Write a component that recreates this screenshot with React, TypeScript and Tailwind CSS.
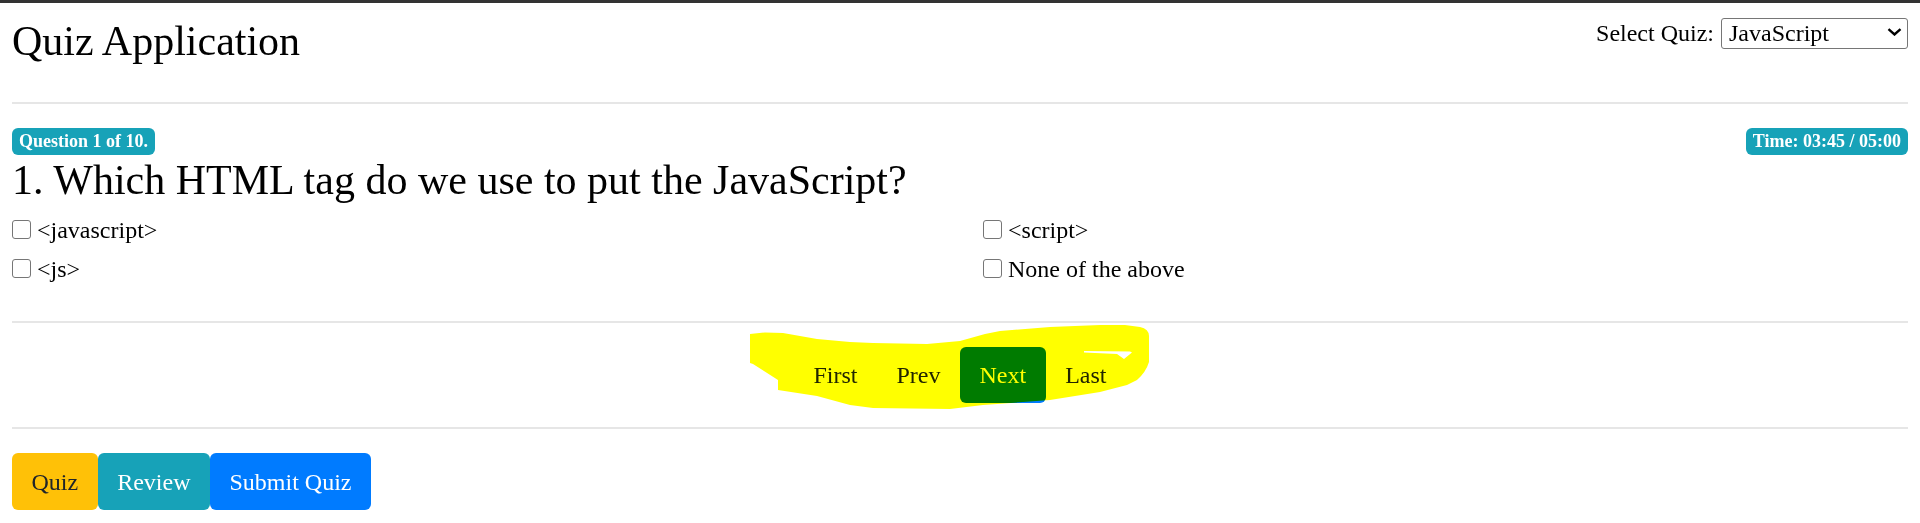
export default function App() {
    const options = ['<javascript>', '<script>', '<js>', 'None of the above']

    return (
        <div className="relative min-h-[523px] bg-white text-black font-['Liberation_Serif','Times_New_Roman',serif]">
            <div className="h-[3px] bg-[#333333]" />
            <div className="px-[12px] pt-[12px]">
                {/* header */}
                <div className="flex items-start justify-between">
                    <h1 className="pt-[1px] text-[42px] leading-[50px] font-normal">Quiz Application</h1>
                    <div className="flex items-center gap-[7px] text-[24px]">
                        <span className="leading-[31px]">Select Quiz:</span>
                        <div className="relative">
                            <select className="appearance-none w-[187px] h-[31px] border border-[#767676] rounded-[3px] bg-white pl-[7px] text-[24px] leading-[29px]">
                                <option>JavaScript</option>
                                <option>Asp.Net</option>
                                <option>C Sharp</option>
                                <option>Design Patterns</option>
                            </select>
                            <svg className="pointer-events-none absolute right-[6px] top-[13px]" width="15" height="8" viewBox="0 0 15 8">
                                <polyline points="1.5,1.2 7.5,6.5 13.5,1.2" fill="none" stroke="#000" strokeWidth="2.4" />
                            </svg>
                        </div>
                    </div>
                </div>

                <div className="mt-[36px] h-[2px] bg-[#e6e6e6]" />

                {/* question */}
                <div className="mt-[24px] flex items-center justify-between">
                    <span className="h-[27px] px-[7px] rounded-[6px] bg-[#17a2b8] text-white text-[18px] font-bold leading-[27px]">Question 1 of 10.</span>
                    <span className="h-[27px] px-[7px] rounded-[6px] bg-[#17a2b8] text-white text-[18px] font-bold leading-[27px]">Time: 03:45 / 05:00</span>
                </div>
                <h3 className="text-[42px] leading-[50px] font-normal">1. Which HTML tag do we use to put the JavaScript?</h3>

                <div className="mt-[5px] grid grid-cols-[971px_1fr] text-[24px]">
                    {options.map((o) => (
                        <label key={o} className="h-[39px] flex items-center gap-[6px] leading-none">
                            <input type="checkbox" className="appearance-none m-0 shrink-0 w-[19px] h-[19px] border-[1.5px] border-[#767676] rounded-[3px] bg-white" />
                            <span>{o}</span>
                        </label>
                    ))}
                </div>

                <div className="mt-[33px] h-[2px] bg-[#e6e6e6]" />

                {/* pager */}
                <div className="mt-[24px] flex justify-center text-[24px]">
                    <button className="h-[56px] px-[19.5px] rounded-[6px] text-[#212529]">First</button>
                    <button className="h-[56px] px-[19.5px] rounded-[6px] text-[#212529]">Prev</button>
                    <button className="h-[56px] px-[19.5px] rounded-[6px] bg-[#007bff] text-white">Next</button>
                    <button className="h-[56px] px-[19.5px] rounded-[6px] text-[#212529]">Last</button>
                </div>

                <div className="mt-[24px] h-[2px] bg-[#e6e6e6]" />

                <div className="mt-[24px] flex text-[24px]">
                    <button className="h-[57px] px-[19.5px] rounded-[6px] bg-[#ffc107] text-[#212529]">Quiz</button>
                    <button className="h-[57px] px-[19.5px] rounded-[6px] bg-[#17a2b8] text-white">Review</button>
                    <button className="h-[57px] px-[19.5px] rounded-[6px] bg-[#007bff] text-white">Submit Quiz</button>
                </div>
            </div>

            {/* highlighter scribble over the pager */}
            <svg className="pointer-events-none absolute left-0 top-0 mix-blend-multiply" width="1920" height="523" viewBox="0 0 1920 523">
                <path
                    d="M750,334 L765,332.5 L783,333 L817,339 L850,342 L873,343 L927,344 L960,341 L985,334 L1000,331 L1050,327 L1100,325 L1125,325 L1140,327 Q1149,329 1149,336 L1149,362 Q1146,372 1137,380 L1127,385 L1100,392 L1050,400 L983,405 L950,409 L873,408 L850,405 L817,396 L778,390 L778,380 L753,364 L750,363 Z"
                    fill="#ffff00"
                />
                <polygon points="1084,351 1130,351.5 1132,352.5 1124,359 1117,354 1084,352.5" fill="#ffffff" />
            </svg>
        </div>
    )
}
